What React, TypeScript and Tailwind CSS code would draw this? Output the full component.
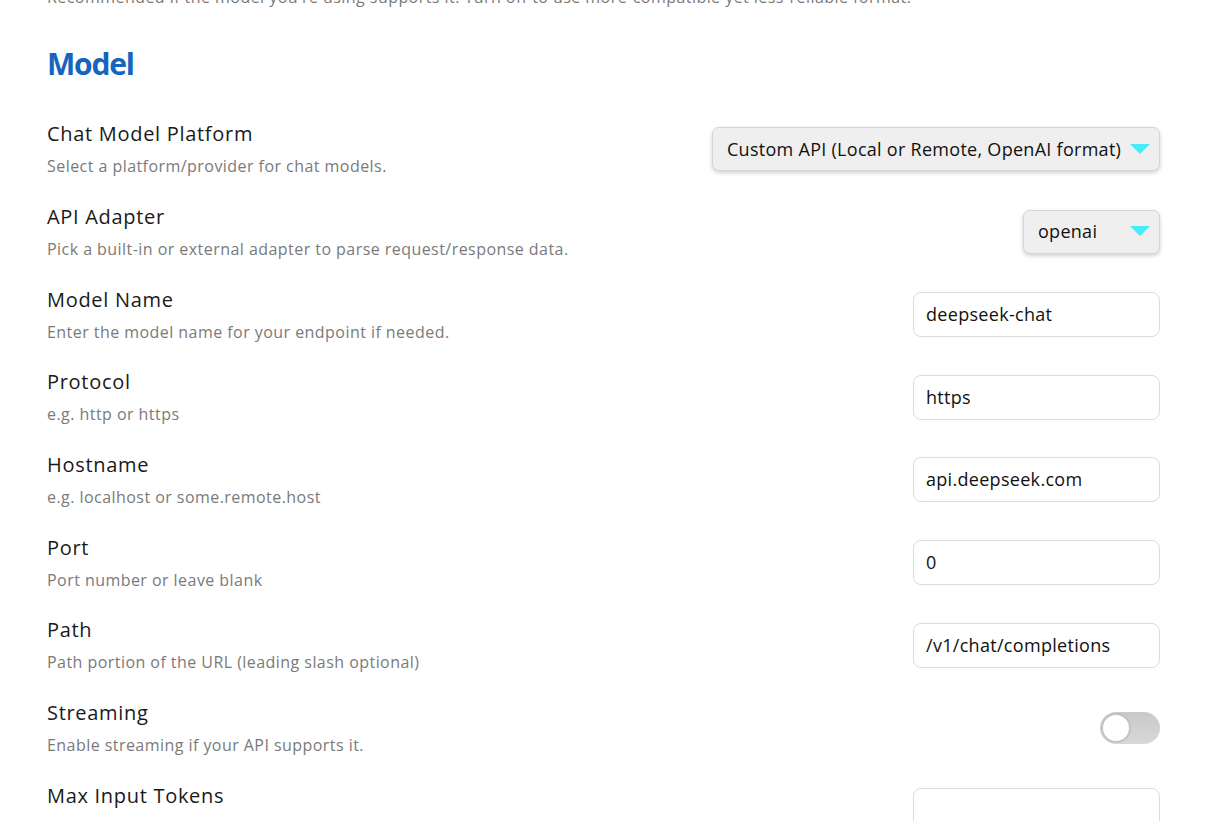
// Settings: Model section

import React from 'react';

const FONT = { fontFamily: '"Open Sans", "Noto Sans", sans-serif' };

interface RowProps {
    title: string;
    desc: string;
    children: React.ReactNode;
}

function Row({ title, desc, children }: RowProps) {
    return (
        <div className="flex items-center justify-between py-[12.33px]">
            <div>
                <div className="text-[20px] leading-[28px] tracking-[0.7px] text-[#1a1a1a]">{title}</div>
                <div className="mt-[6px] text-[16px] leading-[24px] tracking-[0.45px] text-[#7a7a7a]">{desc}</div>
            </div>
            {children}
        </div>
    );
}

function Select({ value, width }: { value: string; width: string }) {
    return (
        <div
            className={`flex h-[44px] items-center justify-between rounded-[7px] border border-[#d4d4d4] bg-[#efefef] pl-[14px] pr-[9px] text-[18px] tracking-[0.28px] text-[#111] shadow-[0_2px_4px_rgba(0,0,0,0.18)] ${width}`}
        >
            <span>{value}</span>
            <svg width="20" height="11" viewBox="0 0 20 11">
                <polygon points="0,0 20,0 10,10" fill="#45ecfb" />
            </svg>
        </div>
    );
}

function Input({ value }: { value: string }) {
    return (
        <div className="flex h-[45px] w-[247px] items-center rounded-[8px] border border-[#dcdcdc] bg-white px-[12px] text-[18px] tracking-[0.3px] text-[#111]">
            {value}
        </div>
    );
}

function Toggle() {
    return (
        <div className="flex h-[32px] w-[60px] items-center rounded-full bg-gradient-to-b from-[#c9c9c9] to-[#d8d8d8] px-[1px]">
            <div className="h-[30px] w-[30px] rounded-full border-[2.5px] border-[#c2c2c2] bg-white" />
        </div>
    );
}

export default function App() {
    return (
        <div className="h-[821px] overflow-hidden bg-white pl-[47px] pr-[60px]" style={FONT}>
            <div className="-mt-[15px] text-[16px] leading-[24px] tracking-[0.45px] text-[#7a7a7a]">
                Recommended if the model you're using supports it. Turn off to use more-compatible yet less-reliable format.
            </div>

            <h2 className="mt-[37px] mb-[26px] text-[30px] leading-[36px] font-bold tracking-[-1.2px] text-[#1565c0]">
                Model
            </h2>

            <Row title="Chat Model Platform" desc="Select a platform/provider for chat models.">
                <Select value="Custom API (Local or Remote, OpenAI format)" width="w-[448px]" />
            </Row>
            <Row title="API Adapter" desc="Pick a built-in or external adapter to parse request/response data.">
                <Select value="openai" width="w-[137px]" />
            </Row>
            <Row title="Model Name" desc="Enter the model name for your endpoint if needed.">
                <Input value="deepseek-chat" />
            </Row>
            <Row title="Protocol" desc="e.g. http or https">
                <Input value="https" />
            </Row>
            <Row title="Hostname" desc="e.g. localhost or some.remote.host">
                <Input value="api.deepseek.com" />
            </Row>
            <Row title="Port" desc="Port number or leave blank">
                <Input value="0" />
            </Row>
            <Row title="Path" desc="Path portion of the URL (leading slash optional)">
                <Input value="/v1/chat/completions" />
            </Row>
            <Row title="Streaming" desc="Enable streaming if your API supports it.">
                <Toggle />
            </Row>
            <Row title="Max Input Tokens" desc="Max number of tokens to send (prompt + history + input)">
                <Input value="" />
            </Row>
        </div>
    );
}
